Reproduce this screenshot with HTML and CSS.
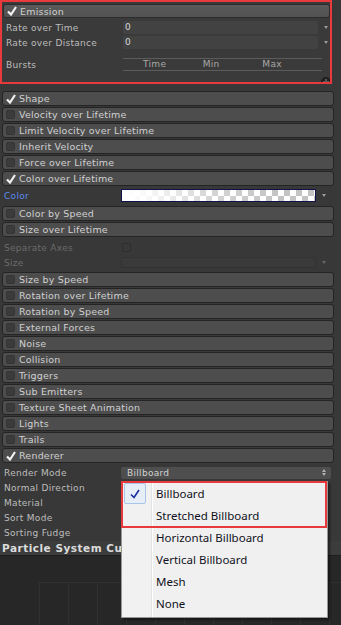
FILE: index.html
```html
<!DOCTYPE html>
<html lang="en">
<head>
	<meta charset="UTF-8">
	<title>Particle System</title>
	<link rel="stylesheet" href="styles.css">
</head>
<body>
	<div class="inspector">
		<div class="mark-box">
			<div class="module-head main"><span class="toggle on"><svg viewBox="0 0 10 10"><path d="M1 5.5 L4 8.5 L9 1" /></svg></span>Emission</div>
			<div class="prop"><span class="label">Rate over Time</span><span class="field">0</span><span class="arrow"></span></div>
			<div class="prop"><span class="label">Rate over Distance</span><span class="field">0</span><span class="arrow"></span></div>
			<div class="bursts">
				<span class="label">Bursts</span>
				<div class="burst-table"><span>Time</span><span>Min</span><span>Max</span></div>
			</div>
			<span class="add-btn"></span>
		</div>

		<div class="modules">
			<div class="module-head"><span class="toggle on"><svg viewBox="0 0 10 10"><path d="M1 5.5 L4 8.5 L9 1" /></svg></span>Shape</div>
			<div class="module-head"><span class="toggle"></span>Velocity over Lifetime</div>
			<div class="module-head"><span class="toggle"></span>Limit Velocity over Lifetime</div>
			<div class="module-head"><span class="toggle"></span>Inherit Velocity</div>
			<div class="module-head"><span class="toggle"></span>Force over Lifetime</div>
			<div class="module-head"><span class="toggle on"><svg viewBox="0 0 10 10"><path d="M1 5.5 L4 8.5 L9 1" /></svg></span>Color over Lifetime</div>
			<div class="body color-body">
				<div class="prop"><span class="label blue">Color</span><span class="field gradient"></span><span class="arrow"></span></div>
			</div>
			<div class="module-head"><span class="toggle"></span>Color by Speed</div>
			<div class="module-head"><span class="toggle"></span>Size over Lifetime</div>
			<div class="body size-body">
				<div class="prop dim"><span class="label">Separate Axes</span><span class="small-check"></span></div>
				<div class="prop dim"><span class="label">Size</span><span class="field off"></span><span class="arrow"></span></div>
			</div>
			<div class="module-head"><span class="toggle"></span>Size by Speed</div>
			<div class="module-head"><span class="toggle"></span>Rotation over Lifetime</div>
			<div class="module-head"><span class="toggle"></span>Rotation by Speed</div>
			<div class="module-head"><span class="toggle"></span>External Forces</div>
			<div class="module-head"><span class="toggle"></span>Noise</div>
			<div class="module-head"><span class="toggle"></span>Collision</div>
			<div class="module-head"><span class="toggle"></span>Triggers</div>
			<div class="module-head"><span class="toggle"></span>Sub Emitters</div>
			<div class="module-head"><span class="toggle"></span>Texture Sheet Animation</div>
			<div class="module-head"><span class="toggle"></span>Lights</div>
			<div class="module-head"><span class="toggle"></span>Trails</div>
			<div class="module-head"><span class="toggle on"><svg viewBox="0 0 10 10"><path d="M1 5.5 L4 8.5 L9 1" /></svg></span>Renderer</div>
			<div class="body render-body">
				<div class="prop"><span class="label">Render Mode</span><span class="popup">Billboard<i class="updown"></i></span></div>
				<div class="prop"><span class="label">Normal Direction</span></div>
				<div class="prop"><span class="label">Material</span></div>
				<div class="prop"><span class="label">Sort Mode</span></div>
				<div class="prop"><span class="label">Sorting Fudge</span></div>
			</div>
		</div>

		<div class="curves-head">Particle System Curves</div>
		<div class="curves">
			<div class="grid"></div>
		</div>

		<!-- popup menu over the inspector -->
		<div class="menu">
			<div class="menu-item checked"><span class="tick"><svg viewBox="0 0 12 12"><path d="M2 6.5 L5 9.5 L10 2" /></svg></span>Billboard</div>
			<div class="menu-item">Stretched Billboard</div>
			<div class="menu-item">Horizontal Billboard</div>
			<div class="menu-item">Vertical Billboard</div>
			<div class="menu-item">Mesh</div>
			<div class="menu-item">None</div>
			<div class="menu-mark"></div>
		</div>
	</div>
</body>
</html>
```

FILE: styles.css
```css
*{
	margin: 0;
	padding: 0;
	box-sizing: border-box;
}
body{
	width: 341px;
	height: 625px;
	overflow: hidden;
	background: #383838;
	font-family: "DejaVu Sans", sans-serif;
	font-size: 9px;
	color: #bdbdbd;
}
.inspector{
	position: relative;
	height: 625px;
}

/* red annotation around Emission */
.mark-box{
	position: relative;
	width: 332px;
	height: 84px;
	border: 2px solid #e8393c;
	background: #3a3a3a;
	overflow: hidden;
}
.modules{
	margin-top: 7px;
}

/* module headers */
.module-head{
	display: flex;
	align-items: center;
	height: 15px;
	margin: 0 7px 1px 2px;
	border: 1px solid #242424;
	border-radius: 3px;
	background: #4d4d4d;
	color: #d0d0d0;
	font-size: 9.5px;
	letter-spacing: 0.2px;
}
.module-head.main{
	margin: 2px 0 0 1px;
	height: 14px;
	background: linear-gradient(#5a5a5a, #525252);
	border-color: #2c2c2c;
}
.toggle{
	width: 9px;
	height: 9px;
	margin: 0 4px 0 3px;
	border-radius: 2px;
	background: #3b3b3b;
	border: 1px solid #343434;
}
.toggle.on{
	background: none;
	border: none;
	width: 10px;
	height: 10px;
	margin: 0 3px 0 3px;
}
.toggle svg{
	display: block;
	width: 10px;
	height: 10px;
	fill: none;
	stroke: #f2f2f2;
	stroke-width: 2.2;
}

/* property rows */
.prop{
	display: flex;
	align-items: center;
	height: 15px;
	padding-left: 4px;
}
.mark-box .module-head + .prop{
	margin-top: 2px;
}
.label{
	width: 117px;
	flex: none;
	letter-spacing: 0.3px;
}
.label.blue{
	color: #5a8cf0;
}
.field{
	width: 195px;
	height: 13px;
	padding-left: 2px;
	background: #424242;
	border-radius: 2px;
	color: #d8d8d8;
	line-height: 13px;
}
.field.gradient{
	border: 1px solid #10104a;
	border-radius: 0;
	background:
		linear-gradient(to right, #fff 0%, rgba(255,255,255,0.9) 12%, rgba(255,255,255,0.3) 45%, rgba(255,255,255,0) 80%),
		repeating-conic-gradient(#c4c4c4 0 25%, #fff 0 50%) 0 0 / 12px 12px;
}
.field.off{
	height: 11px;
	background: #3a3a3a;
	border: 1px solid #333;
}
.arrow{
	width: 0;
	height: 0;
	margin-left: 6px;
	border-left: 2px solid transparent;
	border-right: 2px solid transparent;
	border-top: 3px solid #9a9a9a;
}
.dim{
	color: #6b6b6b;
}
.dim .arrow{
	border-top-color: #666;
}
.small-check{
	width: 9px;
	height: 9px;
	margin-left: 1px;
	border: 1px solid #2e2e2e;
	border-radius: 2px;
	background: #383838;
}

/* bursts */
.bursts{
	display: flex;
	align-items: center;
	margin-top: 8px;
	padding-left: 4px;
	height: 13px;
}
.burst-table{
	display: flex;
	width: 199px;
	height: 13px;
	border-top: 1px solid #5c5c5c;
	border-bottom: 1px solid #5c5c5c;
	padding-left: 20px;
	line-height: 11px;
	color: #a8a8a8;
	letter-spacing: 0.3px;
}
.burst-table span{
	width: 60px;
}
.add-btn{
	position: absolute;
	right: -1px;
	bottom: -5px;
	width: 10px;
	height: 10px;
	border-radius: 50%;
	background: #1f1f1f;
}
.add-btn::before,
.add-btn::after{
	content: "";
	position: absolute;
	background: #5a5a5a;
}
.add-btn::before{
	left: 2px;
	top: 4px;
	width: 6px;
	height: 2px;
}
.add-btn::after{
	left: 4px;
	top: 2px;
	width: 2px;
	height: 6px;
}

/* module bodies */
.color-body{
	padding: 1px 0 3px;
	height: 19px;
}
.size-body{
	padding-top: 2px;
	height: 34px;
}
.render-body{
	padding-top: 1px;
	height: 77px;
	overflow: hidden;
}
.popup{
	position: relative;
	width: 210px;
	height: 12px;
	padding-left: 6px;
	background: #4e4e4e;
	border-radius: 2px;
	color: #d2d2d2;
	line-height: 12px;
	letter-spacing: 0.3px;
}
.updown{
	position: absolute;
	right: 5px;
	top: 2px;
	width: 0;
	height: 8px;
	border-left: 2px solid transparent;
	border-right: 2px solid transparent;
}
.updown::before,
.updown::after{
	content: "";
	position: absolute;
	left: -2px;
	border-left: 2px solid transparent;
	border-right: 2px solid transparent;
}
.updown::before{
	top: 0;
	border-bottom: 3px solid #b0b0b0;
}
.updown::after{
	top: 4px;
	border-top: 3px solid #b0b0b0;
}

/* curves panel */
.curves-head{
	height: 15px;
	padding-left: 2px;
	background: #3c3c3c;
	border-bottom: 1px solid #1e1e1e;
	font-weight: bold;
	font-size: 10.5px;
	line-height: 14px;
	color: #dcdcdc;
	letter-spacing: 0.5px;
}
.curves{
	height: 70px;
	background: #272727;
	padding: 26px 0 0 39px;
}
.grid{
	height: 50px;
	border-top: 1px solid #303030;
	background: repeating-linear-gradient(to right, #303030 0 1px, transparent 1px 29px);
}

/* dropdown menu */
.menu{
	position: absolute;
	left: 121px;
	top: 481px;
	width: 207px;
	height: 137px;
	padding-top: 1px;
	background: linear-gradient(to right, #f1f1f1 0 29px, #e2e3e3 29px 30px, #fff 30px 31px, #f0f0f0 31px);
	border: 1px solid #979797;
	box-shadow: 2px 2px 2px rgba(0,0,0,0.45);
	font-family: "Noto Sans", sans-serif;
	font-size: 11.5px;
	color: #101020;
}
.menu-item{
	position: relative;
	height: 22px;
	line-height: 21px;
	padding-left: 34px;
}
.tick{
	position: absolute;
	left: 2px;
	top: 0;
	width: 22px;
	height: 21px;
	border: 1px solid #a9c6ea;
	border-radius: 2px;
	background: #e6eef8;
}
.tick svg{
	display: block;
	width: 12px;
	height: 12px;
	margin: 4px 0 0 4px;
	fill: none;
	stroke: #1b2fa0;
	stroke-width: 1.6;
}
.menu-mark{
	position: absolute;
	left: -1px;
	top: -1px;
	width: 206px;
	height: 47px;
	border: 2px solid #e8393c;
}
```
